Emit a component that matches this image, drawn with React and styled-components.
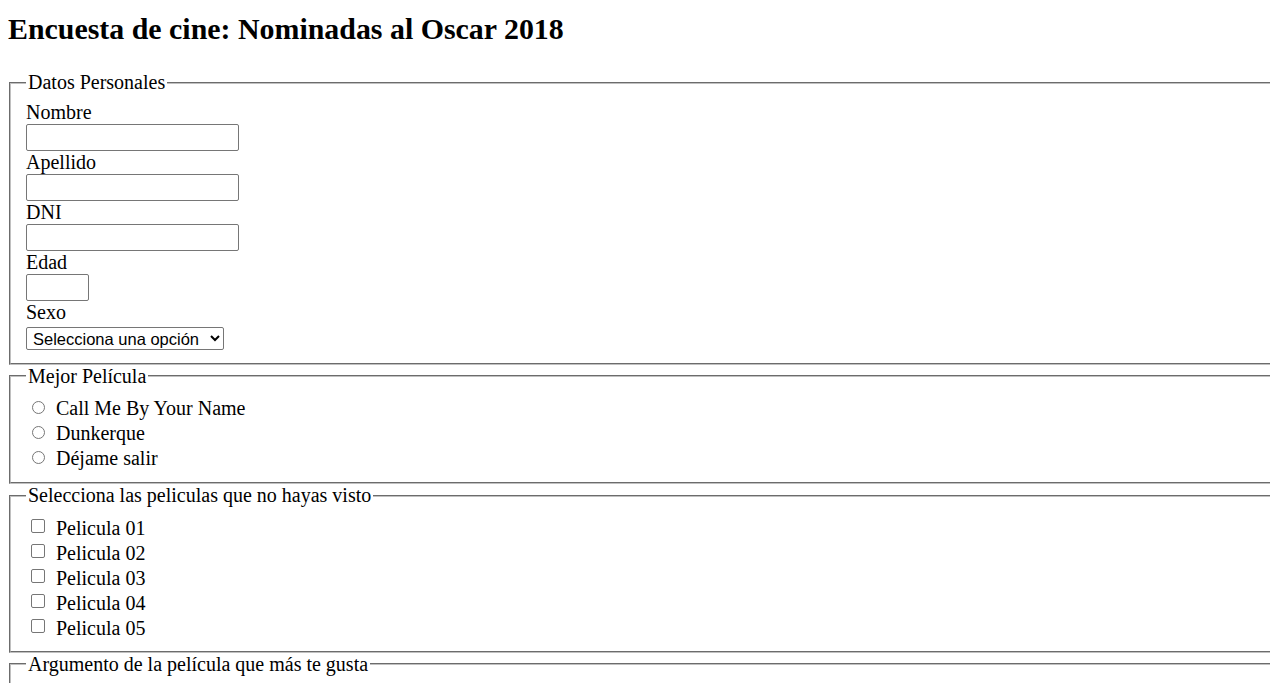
import { createGlobalStyle, styled } from "styled-components"

const GlobalStyle = createGlobalStyle`
  html {
    overflow: hidden;
  }
  body {
    margin: 0;
    padding: 8px;
    font-family: "Liberation Serif", "Times New Roman", serif;
    color: #000;
    background: #fff;
  }
`

const Title = styled.h1`
  margin: 4px 0 25px;
  font-size: 29.9px;
  line-height: 34px;
  font-weight: bold;
`

const Form = styled.form`
  display: block;
  font-size: 20px;
`

const Fieldset = styled.fieldset`
  box-sizing: content-box;
  width: 100%;
  min-width: 1300px;
  margin: 0 0 0 1px;
  padding: 7px 15px ${(p) => (p.$tight ? 11.5 : 12.5)}px;
  border: 2px groove #c0c0c0;
  font-size: 20px;
`

const Legend = styled.legend`
  padding: 0 2px;
  line-height: 23px;
`

const Label = styled.label`
  display: block;
  height: 23px;
  line-height: 23px;
`

const TextInput = styled.input`
  display: block;
  box-sizing: border-box;
  width: ${(p) => p.$w || 213}px;
  height: 27px;
  margin: 0;
  padding: 1px 3px;
  border: 1px solid #767676;
  border-radius: 2px;
  font: 13.33px "Liberation Sans", Arial, sans-serif;
  background: #fff;
`

const Select = styled.select`
  display: block;
  box-sizing: border-box;
  width: 198px;
  height: 23px;
  margin: 3px 0 0;
  padding: 0 2px;
  border: 1px solid #767676;
  border-radius: 2px;
  background: #fff;
  color: #000;
  font: 16.5px "Liberation Sans", Arial, sans-serif;
`

const Option = styled.label`
  display: flex;
  align-items: center;
  height: 25px;
  line-height: 23px;

  span {
    padding-top: 3px;
  }
`

const Radio = styled.input.attrs({ type: "radio" })`
  appearance: none;
  flex: none;
  box-sizing: border-box;
  width: 13px;
  height: 13px;
  margin: 0 11px 0 6px;
  border: 1px solid #767676;
  border-radius: 50%;
  background: #fff;
`

const Check = styled.input.attrs({ type: "checkbox" })`
  appearance: none;
  flex: none;
  box-sizing: border-box;
  width: 14px;
  height: 14px;
  margin: -1px 11px 0 5px;
  border: 1px solid #767676;
  border-radius: 2px;
  background: #fff;
`

const TextArea = styled.textarea`
  display: block;
  width: 400px;
  height: 80px;
  margin-top: 4px;
  border: 1px solid #767676;
  border-radius: 2px;
`

const personales = [
  { id: "nombre", label: "Nombre" },
  { id: "apellido", label: "Apellido" },
  { id: "dni", label: "DNI" },
  { id: "edad", label: "Edad", w: 63 },
]

const nominadas = ["Call Me By Your Name", "Dunkerque", "Déjame salir"]
const peliculas = ["Pelicula 01", "Pelicula 02", "Pelicula 03", "Pelicula 04", "Pelicula 05"]

export default function App() {
  return (
    <>
      <GlobalStyle />
      <Title>Encuesta de cine: Nominadas al Oscar 2018</Title>
      <Form onSubmit={(e) => e.preventDefault()}>
        <Fieldset>
          <Legend>Datos Personales</Legend>
          {personales.map((f) => (
            <div key={f.id}>
              <Label htmlFor={f.id}>{f.label}</Label>
              <TextInput id={f.id} type="text" $w={f.w} />
            </div>
          ))}
          <Label htmlFor="sexo">Sexo</Label>
          <Select id="sexo" defaultValue="">
            <option value="">Selecciona una opción</option>
            <option value="f">Femenino</option>
            <option value="m">Masculino</option>
          </Select>
        </Fieldset>

        <Fieldset>
          <Legend>Mejor Película</Legend>
          {nominadas.map((n) => (
            <Option key={n}>
              <Radio name="mejor" value={n} />
              <span>{n}</span>
            </Option>
          ))}
        </Fieldset>

        <Fieldset $tight>
          <Legend>Selecciona las peliculas que no hayas visto</Legend>
          {peliculas.map((p) => (
            <Option key={p}>
              <Check value={p} />
              <span>{p}</span>
            </Option>
          ))}
        </Fieldset>

        <Fieldset>
          <Legend>Argumento de la película que más te gusta</Legend>
          <TextArea />
        </Fieldset>
      </Form>
    </>
  )
}
